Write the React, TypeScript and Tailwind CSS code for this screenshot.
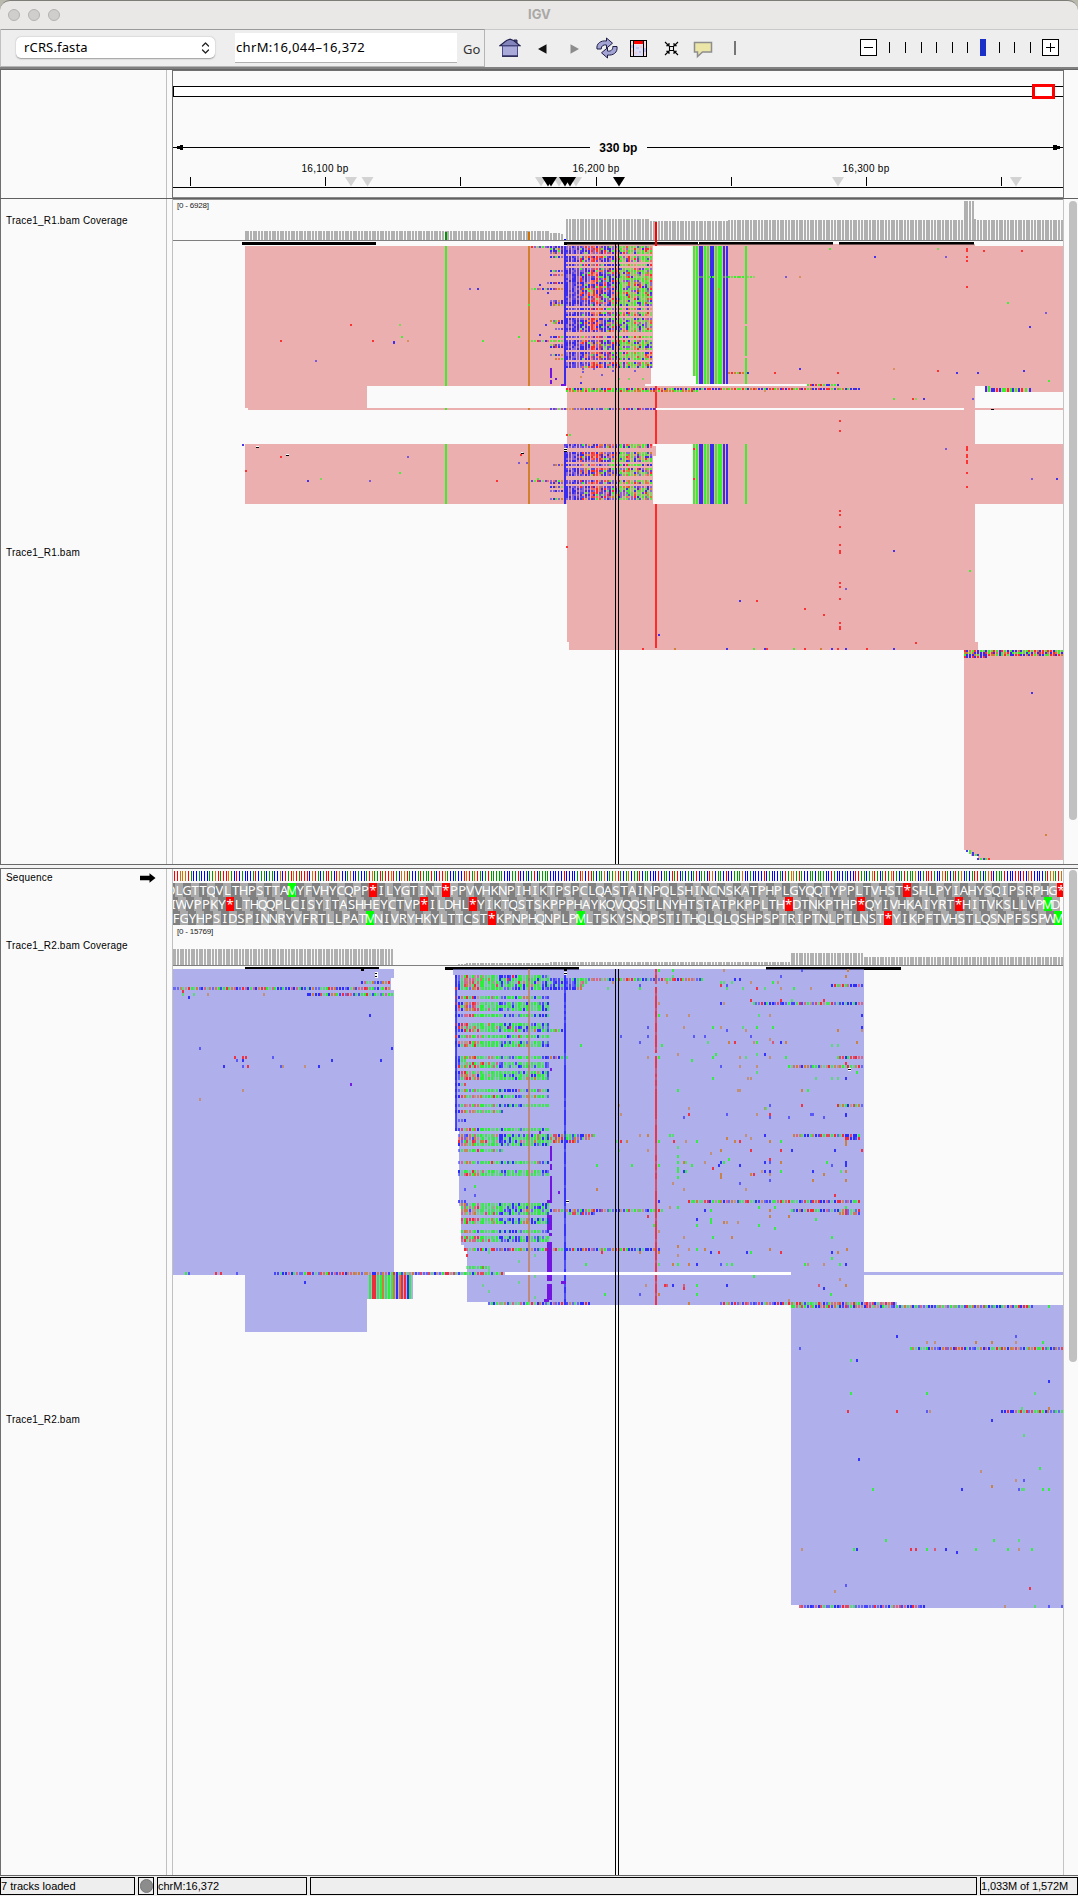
import React from 'react';

type Base = 'A' | 'C' | 'G' | 'T';
type Mark = { x: number; y: number; w: number; h: number; c: string; o?: number };

const PITCH = 2.703;
const ORIGIN = 172.1;
const px = (i: number) => Math.floor(ORIGIN + PITCH * i);
const idx = (x: number) => Math.round((x + 0.4 - ORIGIN) / PITCH);

const R1: Record<string, string> = { A: '#3eed2e', C: '#3b2ceb', G: '#d1802f', T: '#ff2b2b', P: '#7414e0', K: '#000000', W: '#ffffff' };
const R2: Record<string, string> = { A: '#2eee3c', C: '#2d2dfc', G: '#c9803f', T: '#ee2d3c', P: '#7414e0', K: '#000000', W: '#ffffff' };
const PINK = '#ebafaf';
const LAV = '#afafeb';
const PAPER = '#fafafa';

const makeRandom = (seed: number) => {
  let s = seed;
  return () => {
    s = (s * 1664525 + 1013904223) % 4294967296;
    return s / 4294967296;
  };
};

const pick = (r: number, weights: [string, number][]) => {
  let acc = 0;
  for (const [k, w] of weights) {
    acc += w;
    if (r < acc) return k;
  }
  return weights[weights.length - 1][0];
};

const shade = (r: number) => (r < 0.45 ? 1 : r < 0.7 ? 0.8 : 0.55);

/** A read's run of mismatched bases between two pixel columns. */
const run = (rnd: () => number, pal: Record<string, string>, y: number, h: number, x0: number, x1: number, weights: (i: number) => [string, number][], strong = false): Mark[] => {
  const out: Mark[] = [];
  for (let i = idx(x0); px(i) + 2 <= x1 + 0.5; i++) {
    const c = pick(rnd(), weights(i));
    const o = strong ? 1 : shade(rnd());
    if (c !== '-') out.push({ x: px(i), y, w: 2, h, c: pal[c], o });
  }
  return out;
};

/** Isolated mismatches, listed as base letter + "x,y"; a lower-case letter is a low quality call. */
const dots = (pal: Record<string, string>, h: number, ox: number, oy: number, sx: number, list: string): Mark[] =>
  list.trim().split(/\s+/).map((t) => {
    const c = t[0];
    const [a, b] = t.slice(1).split(',').map(Number);
    return { x: Math.round(ox + a / sx) - 1, y: Math.round(oy + b / 3 - h / 2), w: 2, h, c: pal[c.toUpperCase()], o: c === c.toUpperCase() ? 0.95 : 0.65 };
  });

const even: [string, number][] = [['A', 0.27], ['C', 0.36], ['G', 0.15], ['T', 0.22]];

const Marks = ({ items }: { items: Mark[] }) => (
  <>
    {items.map((m, k) => (
      <rect key={k} x={m.x} y={m.y} width={m.w} height={m.h} fill={m.c} opacity={m.o} />
    ))}
  </>
);

const Bars = ({ x0, x1, top, bottom }: { x0: number; x1: number; top: number; bottom: number }) => {
  const out: Mark[] = [];
  for (let i = idx(x0); px(i) < x1; i++) out.push({ x: px(i), y: top, w: 2, h: bottom - top, c: '#b0b0b0' });
  return <Marks items={out} />;
};

const Box = ({ b, c }: { b: [number, number, number, number]; c: string }) => (
  <rect x={b[0]} y={b[1]} width={b[2] - b[0]} height={b[3] - b[1]} fill={c} />
);

/* ---------- forward reads ---------- */

const buildForward = (): Mark[] => {
  const rnd = makeRandom(7);
  const out: Mark[] = [];
  const dense = (i: number): [string, number][] => {
    const k = i - 145;
    if (k < 6) return [['C', 1]];
    if (k < 10) return [['C', 0.68], ['T', 0.16], ['G', 0.08], ['A', 0.08]];
    if (k < 14) return [['T', 0.5], ['C', 0.35], ['G', 0.1], ['A', 0.05]];
    if (k < 20) return [['C', 0.62], ['A', 0.18], ['T', 0.14], ['G', 0.06]];
    if (k % 4 === 1) return [['A', 0.85], ['C', 0.15]];
    return [['A', 0.44], ['C', 0.3], ['G', 0.12], ['T', 0.14]];
  };
  const skipA = [4, 8, 10, 30, 32, 35, 43, 44, 46, 52, 57];
  for (let r = 0; r < 61; r++) if (!skipA.includes(r)) out.push(...run(rnd, R1, 246 + r * 2, 2, 564, 653, dense));
  const skipB = [2, 3, 9, 11, 16, 17, 20];
  for (let r = 0; r < 28; r++) if (!skipB.includes(r)) out.push(...run(rnd, R1, 444 + r * 2, 2, 564, 653, dense));
  const tails: [number, number][] = [[246, 530], [248, 550], [250, 550], [252, 550], [256, 550], [270, 550], [274, 550], [282, 547], [288, 530], [300, 550], [302, 550], [304, 550], [320, 550], [322, 553], [328, 555], [336, 550], [340, 530], [344, 550], [346, 550], [354, 550], [358, 556], [464, 553], [480, 530], [482, 550], [486, 550], [490, 550], [498, 550]];
  for (const [y, x] of tails) {
    out.push(...run(rnd, R1, y, 2, x, 563, (i) => (i < 138 ? [['A', 0.5], ['C', 0.4], ['T', 0.1]] : [['C', 0.66], ['A', 0.14], ['T', 0.12], ['G', 0.08]])));
  }
  out.push(...run(rnd, R1, 388, 2, 567, 860, () => even, true));
  out.push(...run(rnd, R1, 390, 2, 567, 698, () => [['A', 0.5], ['G', 0.3], ['T', 0.2]], true));
  out.push(...run(rnd, R1, 372, 2, 728, 749, () => even, true));
  out.push(...run(rnd, R1, 384, 2, 807, 839, () => even, true));
  out.push(...run(rnd, R1, 408, 2, 550, 656, () => [['C', 0.6], ['A', 0.2], ['T', 0.12], ['G', 0.08]]));
  out.push(...run(rnd, R1, 276, 2, 693, 755, () => [['A', 1]]));
  for (const y of [650, 652, 654]) out.push(...run(rnd, R1, y, 2, 964, 1063, () => even, true));
  out.push(...run(rnd, R1, 656, 2, 964, 987, () => [['C', 0.85], ['T', 0.15]], true));
  return out;
};

const FORWARD = buildForward();

const FORWARD_DOTS: Mark[] = [
  ...dots(R1, 2, 0, 195, 2.904, 'c1365,282 C1388,282 A1536,330 T1019,390 a1161,390 A1167,426 T816,438 T1082,438 C1144,440 C1144,443 g1185,438 A1402,438 A1507,426 c917,498 C706,750'),
  ...dots(R1, 2, 160, 435, 3, 'T363,66 T258,108 C444,138 a483,132 c630,138 c744,66 A720,114 T1011,138 T1083,60 c1077,84 c1101,84 A1134,132'),
  ...dots(R1, 2, 538, 195, 2.904, 'A848,162 C978,186 a1161,162 T1295,168 T1405,168 c1185,186 T1246,162 T1246,168 T1246,186 T1246,198 T1246,276 c720,246 g761,246 A1365,324 c1475,354 C1429,396 C761,522 g1034,522 T1161,528 T688,534 T871,534 C1217,534 C1278,534 C1411,528 A1484,558 A1034,612 T1089,612 a1098,612 C1121,612 c1263,612 T877,678 T877,708 T84,720 A93,720 C6,270 C29,294 C23,390 C6,420 c163,522 c218,528 c186,540 a264,552 c282,528 a305,552 A236,552 C125,564 g125,546 c131,522 c131,530 T453,762 g659,588 g525,282'),
  ...dots(R1, 2, 538, 435, 2.904, 'c1185,42 T1246,36 T1246,42 T1246,46 T1246,60 T1246,66 T1246,78 T1246,84 T1246,114 T1246,156 c1434,132 C1507,132 T453,132 T453,42 T877,228 T877,240 T877,276 T877,330 T877,348 T877,354 T877,444 T877,456 T877,492 T877,564 T877,576 T877,582 T84,336 C1034,348 A1254,408 c894,462 C587,498 T636,498 T775,522 T830,540 C351,600 T1098,624 T305,642 G398,642 C549,642 A627,642 C659,642 T665,642 A743,642 T775,642 G822,642 C854,642 T871,642 C894,642 T955,642 C1034,642 C1434,774 G1475,1200 C1246,1248 A1254,1248 A1254,1253 C1263,1254 C1263,1260 A1271,1260 C1278,1260 C1278,1272 A1286,1272 C1295,1272 A1302,1272 T1309,1272'),
  { x: 550, y: 368, w: 2, h: 10, c: R1.P }, { x: 550, y: 380, w: 2, h: 4, c: R1.P }, { x: 555, y: 378, w: 2, h: 2, c: R1.P }, { x: 561, y: 384, w: 5, h: 2, c: R1.P },
];

const STRIPES: [number, number, Base][] = [[693, 2, 'A'], [696, 2, 'A'], [699, 4, 'C'], [704, 2, 'A'], [707, 2, 'A'], [710, 4, 'C'], [715, 2, 'A'], [718, 4, 'A'], [723, 2, 'C'], [726, 2, 'C']];

const ForwardPlot = () => (
  <svg className="block shrink-0" width="890" height="664" viewBox="173 200 890 664" shapeRendering="crispEdges">
    <Bars x0={245} x1={550} top={231} bottom={240} />
    <Bars x0={550} x1={560} top={233} bottom={240} />
    <Bars x0={561} x1={563} top={234} bottom={240} />
    <Bars x0={566} x1={650} top={219} bottom={240} />
    <Bars x0={650} x1={728} top={221} bottom={240} />
    <Bars x0={728} x1={963} top={220} bottom={240} />
    <Bars x0={964} x1={974} top={201} bottom={240} />
    <Bars x0={974} x1={976} top={219} bottom={240} />
    <Bars x0={977} x1={1063} top={220} bottom={240} />
    <Box b={[445, 232, 447, 240]} c="#009600" />
    <Box b={[528, 232, 530, 240]} c="#d17105" />
    <Box b={[564, 239, 566, 240]} c="#0000ff" />
    <Box b={[173, 240, 1063, 241]} c="#7f7f7f" />
    <Box b={[245, 246, 653, 386]} c={PINK} />
    <Box b={[651, 368, 653, 386]} c={PAPER} />
    <Box b={[245, 386, 367, 408]} c={PINK} />
    <Box b={[248, 408, 656, 410]} c={PINK} />
    <Box b={[567, 244, 975, 246]} c={PINK} />
    <Box b={[242, 242, 376, 245]} c="#000" />
    <Box b={[564, 242, 698, 244]} c="#000" />
    <Box b={[699, 242, 833, 244]} c="#000" />
    <Box b={[839, 242, 974, 244]} c="#000" />
    <Box b={[567, 244, 833, 245]} c="#6b5050" />
    <Box b={[839, 244, 974, 245]} c="#6b5050" />
    <Box b={[564, 242, 567, 245]} c="#000" />
    <Box b={[693, 246, 1063, 386]} c={PINK} />
    <Box b={[645, 384, 807, 386]} c={PAPER} />
    <Box b={[567, 386, 975, 408]} c={PINK} />
    <Box b={[985, 386, 1063, 392]} c={PINK} />
    <Box b={[964, 408, 1063, 410]} c={PINK} />
    <Box b={[567, 410, 975, 444]} c={PINK} />
    <Box b={[245, 444, 653, 504]} c={PINK} />
    <Box b={[651, 446, 656, 456]} c={PINK} />
    <Box b={[693, 444, 1063, 504]} c={PINK} />
    <Box b={[567, 504, 975, 642]} c={PINK} />
    <Box b={[569, 642, 978, 650]} c={PINK} />
    <Box b={[964, 650, 1063, 850]} c={PINK} />
    <Box b={[971, 850, 1063, 856]} c={PINK} />
    <Box b={[978, 856, 1063, 860]} c={PINK} />
    {[[246, 386], [408, 410], [444, 504]].map(([a, b]) => (
      <g key={a}>
        <Box b={[445, a, 447, b]} c={R1.A} />
        <Box b={[528, a, 530, b]} c={R1.G} />
      </g>
    ))}
    {STRIPES.map(([x, w, c]) => (
      <g key={x}>
        <Box b={[x, 246, x + w, x === 693 ? 376 : 384]} c={R1[c]} />
        <Box b={[x, 444, x + w, 504]} c={R1[c]} />
      </g>
    ))}
    <Box b={[693, 376, 696, 384]} c={PAPER} />
    <Box b={[745, 246, 747, 324]} c={R1.A} />
    <Box b={[745, 326, 747, 356]} c={R1.A} />
    <Box b={[745, 358, 747, 384]} c={R1.A} />
    <Box b={[745, 444, 747, 504]} c={R1.A} />
    <Box b={[655, 386, 657, 444]} c={R1.T} />
    <Box b={[656, 408, 964, 410]} c={PAPER} />
    <Box b={[655, 504, 657, 648]} c={R1.T} />
    <Box b={[655, 222, 657, 246]} c="#ff0000" />
    <Marks items={FORWARD} />
    <Box b={[564, 246, 566, 385]} c={R1.C} />
    <Box b={[564, 452, 566, 504]} c={R1.C} />
    <Marks items={FORWARD_DOTS} />
    {([['C', 985, 386, 392], ['A', 988, 386, 392], ['C', 991, 388, 392], ['C', 993, 388, 392], ['T', 996, 388, 392], ['C', 999, 388, 392], ['A', 1002, 388, 392], ['A', 1004, 388, 392], ['T', 1007, 388, 392], ['A', 1010, 388, 392], ['C', 1012, 388, 392], ['A', 1015, 388, 392], ['C', 1018, 388, 392], ['T', 1021, 388, 392], ['A', 1025, 388, 392], ['C', 1029, 388, 392]] as [Base, number, number, number][]).map(([c, x, a, b]) => (
      <Box key={x} b={[x, a, x + 2, b]} c={R1[c]} />
    ))}
    <Box b={[564, 448, 567, 452]} c="#fff" />
    <Box b={[564, 449, 567, 450]} c="#000" />
    <Box b={[564, 451, 567, 452]} c="#000" />
    <Box b={[991, 409, 994, 410]} c="#000" />
    <Box b={[256, 446, 259, 448]} c="#fff" />
    <Box b={[256, 447, 259, 448]} c="#000" />
    <Box b={[286, 454, 289, 456]} c="#fff" />
    <Box b={[286, 455, 289, 456]} c="#000" />
    <Box b={[521, 452, 523, 453]} c="#fff" />
    <Box b={[521, 453, 524, 454]} c="#000" />
    <Box b={[615, 244, 616, 864]} c="#000" />
    <Box b={[618, 244, 619, 864]} c="#000" />
  </svg>
);

/* ---------- reference sequence ---------- */

const SEQUENCE =
  'TTTGGGTACCACCCAAGTATTGACTCACCCATCAACAACCGCTATGTATTTCGTACATTACTGCCAGCCACCATGAATATTGTACGGTACCATAAATACTTGACCACCTGTAGTACATAAAAACCCAATCCACATCAAAACCCCCTCCCCATGCTTACAAGCAAGTACAGCAATCAACCCTCAACTATCACACATCAACTGCAACTCCAAAGCCACCCCTCACCCACTAGGATACCAACAAACCTACCCACCCTTAACAGTACATAGTACATAAAGCCATTTACCGTACATAGCACATTACAGTCAAATCCCTTCTCGTCCCCATGGATGACCCCCC';
const SEQ_COLOR: Record<string, string> = { A: '#009600', C: '#0000ff', G: '#d17105', T: '#ff0000' };

const FRAMES: { start: number; aa: string }[] = [
  { start: -2, aa: 'DLGTTQVLTHPSTTAMYFVHYCQPP*ILYGTINT*PPVVHKNPIHIKTPSPCLQASTAINPQLSHINCNSKATPHPLGYQQTYPPLTVHST*SHLPYIAHYSQIPSRPHG*' },
  { start: -1, aa: 'IWVPPKY*LTHQQPLCISYITASHHEYCTVP*ILDHL*YIKTQSTSKPPPHAYKQVQQSTLNYHTSTATPKPPLTH*DTNKPTHP*QYIVHKAIYRT*HITVKSLLVPMD' },
  { start: 0, aa: 'FGYHPSIDSPINNRYVFRTLLPATMNIVRYHKYLTTCST*KPNPHQNPLPMLTSKYSNQPSTITHQLQLQSHPSPTRIPTNLPTLNST*YIKPFTVHSTLQSNPFSSPWM' },
];

const SequenceTrack = () => (
  <div className="flex w-[890px] flex-col overflow-hidden pb-[4px] pt-[2px]">
    <svg className="mb-[2px] block shrink-0" width="890" height="10" viewBox="173 0 890 10" shapeRendering="crispEdges">
      {SEQUENCE.split('').map((b, i) => (
        <rect key={i} x={px(i)} y={0} width={1} height={10} fill={SEQ_COLOR[b]} />
      ))}
    </svg>
    {FRAMES.map((f) => (
      <div key={f.start} className="flex h-[14px] w-[890px]">
        {f.aa.split('').map((a, k) => (
          <span
            key={k}
            style={k === 0 ? { marginLeft: ORIGIN - 173 + f.start * PITCH } : undefined}
            className={
              'flex h-[14px] w-[8.109px] shrink-0 items-center justify-center text-[13px] leading-[14px] text-white ' +
              (a === '*' ? 'bg-[#ff0000]' : a === 'M' ? 'bg-[#00ff00]' : k % 2 ? 'bg-[#aaaaaa]' : 'bg-[#808080]')
            }
          >
            {a}
          </span>
        ))}
      </div>
    ))}
  </div>
);

/* ---------- reverse reads ---------- */

const buildReverse = (): Mark[] => {
  const rnd = makeRandom(31);
  const out: Mark[] = [];
  const dense = (i: number): [string, number][] => {
    const x = px(i);
    if (x < 461) return [['C', 0.85], ['T', 0.15]];
    if (x < 478) return [['G', 0.26], ['T', 0.3], ['A', 0.36], ['C', 0.08]];
    if (x < 498) return [['A', 0.88], ['T', 0.06], ['G', 0.06]];
    if (x < 506) return [['C', 0.5], ['A', 0.5]];
    if (x < 522) return [['A', 0.6], ['C', 0.34], ['T', 0.06]];
    if (x < 540) return [['A', 0.7], ['C', 0.2], ['G', 0.1]];
    return [['A', 0.45], ['C', 0.55]];
  };
  const rows = [2, 3, 4, 5, 6, 9, 11, 12, 13, 15, 18, 19, 20, 22, 24, 25, 29, 31, 32, 34, 35, 36, 40, 42, 45, 53];
  for (const r of rows) out.push(...run(rnd, R2, 969 + r * 3, 3, 455, 549, dense));
  for (const r of [30, 38, 47]) out.push(...run(rnd, R2, 969 + r * 3, 3, 455, r === 47 ? 503 : 467, dense));
  for (const y of [1119, 1200]) out.push(...run(rnd, R2, y, 3, 458, 467, () => [['C', 1]]));
  for (const y of [1134, 1137, 1140, 1143, 1161, 1170, 1173]) out.push(...run(rnd, R2, y, 3, 458, 549, dense));
  out.push(...run(rnd, R2, 1149, 3, 458, 503, dense));
  for (const y of [1203, 1206, 1209, 1212, 1218, 1221, 1230, 1236, 1239]) out.push(...run(rnd, R2, y, 3, 461, 549, dense));
  out.push(...run(rnd, R2, 1266, 3, 466, 491, () => [['A', 0.7], ['T', 0.3]]));
  for (const y of [978, 981, 984, 987]) {
    out.push(...run(rnd, R2, y, 3, 550, y === 978 ? 586 : 592 - (y - 978), (i) => (px(i) < 575 ? [['C', 0.9], ['A', 0.1]] : [['A', 0.4], ['G', 0.3], ['T', 0.3]])));
  }
  const longRows: [number, number, number][] = [
    [978, 586, 703], [984, 832, 864], [1002, 752, 864], [1029, 550, 563], [1056, 550, 563], [1056, 837, 864], [1065, 787, 864], [1104, 837, 864],
    [1134, 550, 595], [1137, 550, 592], [1140, 550, 580], [1134, 793, 862], [1137, 845, 862], [1200, 689, 862], [1209, 550, 665], [1212, 570, 596], [1209, 791, 862], [1212, 838, 862],
    [1248, 464, 661], [1272, 274, 503], [1302, 488, 590], [1302, 720, 896], [1305, 791, 1033], [1347, 910, 1063], [1410, 1002, 1063],
    [987, 173, 391], [993, 307, 394], [981, 362, 391],
  ];
  for (const [y, a, b] of longRows) out.push(...run(rnd, R2, y, 3, a, b, () => even));
  out.push(...run(rnd, R2, 1605, 3, 799, 925, () => [['C', 0.55], ['T', 0.33], ['A', 0.12]]));
  for (let k = 0; k < 10; k++) out.push({ x: [488, 534, 518, 482][k % 4], y: 1251 + Math.floor((k * 5) / 3) * 3, w: 2, h: 3, c: R2.A, o: 0.5 });
  return out;
};

const REVERSE = buildReverse();

const REVERSE_DOTS: Mark[] = [
  ...dots(R2, 3, 0, 860, 2.904, 'T531,394 a531,403 a563,403 g604,403 C549,412 g767,403 C1074,466 c581,565 C1138,565 T682,592 c688,601 T706,592 T713,592 C706,601 c793,592 C964,601 C1105,601 C650,619 c706,619 T719,619 c817,619 g822,619 g886,619 C926,619 P1019,673 g706,691 g581,718'),
  ...dots(R2, 3, 538, 860, 2.904, 'A351,331 A392,331 a392,349 g540,331 c767,331 G900,331 c706,349 G894,349 g375,367 c296,376 A296,385 a203,385 g218,367 a531,367 T531,376 a540,367 a563,367 a549,385 c549,376 a595,385 g618,367 T636,385 a659,385 g706,385 A682,367 g697,367 A743,385 g793,385 C572,358 C587,358 g351,430 C531,430 g540,430 T618,421 T706,421 a738,421 T830,421 A351,466 g375,466 g438,466 a642,466 g674,466 C941,466 c320,502 g424,502 A508,502 g531,502 a595,502 A636,502 A682,502 c549,511 g604,511 G871,511 C941,502 g941,511 c241,529 c320,529 c453,529 c485,529 c618,529 g674,538 c296,547 a494,547 G555,547 T572,547 g627,547 A636,547 t682,547 C706,547 G720,547 G926,547 A125,556 A360,556 a854,556 a871,556 g406,583 A517,583 a636,583 C659,583 g320,592 A351,592 A508,592 g587,592 a604,592 g674,592 A720,592 A447,601 a84,592 c531,619 g587,619 g636,619 a636,637 T894,610 A926,637 P38,628 A508,655 g610,655 g618,655 a807,655 a854,655 a871,655 C894,655 A406,691 g581,691 g587,691 G767,691 A784,691 T767,736 c674,736 g438,745 g659,745 a663,745 g241,763 T438,763 c549,763 g636,763 c424,772 T674,763 c674,772 c729,772 c793,763 c799,763 C894,763 C894,767 c830,772 g235,736'),
  ...dots(R2, 3, 430, 1120, 3, 'A501,136 A606,136 G501,208 P387,217 P330,37 g630,46 G654,46 A720,46 a728,46 G891,55 g948,46 C1005,46 A559,64 G591,64 T573,64 A687,64 T733,64 g769,64 A801,64 G915,64 T930,64 g963,55 G1020,64 A1053,64 G1248,64 G1248,73 a744,82 g654,91 a567,91 G873,91 T963,91 T1053,91 C1086,91 C1215,91 T1296,91 g843,100 A744,109 A744,127 A744,145 A744,154 A744,172 A687,136 G763,127 a768,127 A786,136 g825,127 C873,127 C867,136 A882,127 A897,118 T849,145 C930,136 C1005,127 c1020,127 T1020,118 G1053,127 C1248,127 C1248,136 A1191,127 c1206,136 C763,154 A768,154 G873,163 G873,172 G963,163 T972,163 g996,154 C1005,154 C1020,154 g1020,163 A1053,154 C1149,154 G1182,163 a1233,154 G1248,154 c1020,181 G1149,181 G1248,181 g729,190 c930,190 g948,208 g762,208 T1215,226 C687,244 g720,262 A744,262 A987,262 A1035,262 A1248,262 T654,289 A672,316 C825,271 A843,271 G1020,271 G1020,289 C801,298 A801,316 A843,307 A843,298 G882,307 g891,307 g924,307 A987,316 A1035,325 G1077,289 A1158,298 g687,334 g762,352 A849,352 G906,352 A1206,352 G744,379 c687,388 g777,388 G825,388 A801,388 G1020,388 T516,397 G630,397 G687,397 C843,397 T867,397 C951,397 A963,397 T1053,397 C1206,397 G1224,397 G1251,388 A1206,415 g744,406 A468,433 a687,433 G728,433 A744,433 G777,433 C801,433 c873,433 a891,433 A906,433 A1125,433 g1134,433 g1182,433 A1230,433 C1248,433 A972,469 g1230,478 g648,496 T705,496 t711,496 C729,496 t762,496 T762,505 A801,496 C891,496 t1167,496 C1182,505 G1248,496 A525,523 c630,523 G687,523 A801,523 A1203,523 G777,550 g1077,541 A135,199 c135,226 c105,208 T111,406'),
  ...dots(R2, 3, 160, 1240, 3, 'A78,100 c87,100 T168,100 T183,100 c231,100 C435,127'),
  ...dots(R2, 3, 770, 1240, 3, 'C381,289 c738,289 g471,307 g495,307 G618,307 G666,307 g738,307 A819,307 c90,325 a243,361 C261,361 C837,424 A243,460 A471,460 a795,460 T234,514 T381,514 c471,514 g480,514 a756,505 G837,505 C666,541 a762,586 C267,658 A810,685 g633,694 g738,721 c762,721 G666,739 A309,748 C576,748 c747,748 a756,748 a762,748 A819,748 A837,748 A348,901 A672,901 a747,901 g96,928 A252,928 C261,928 T423,928 T438,928 A471,928 t495,928 C528,928 A618,928 A714,928 g747,928 A786,928 C561,937 c228,1036 T780,1045 g195,1054 g705,1099 a795,1099 c837,1099 c876,1099 A837,199'),
];

const LOWER_STRIPES: [number, number, Base][] = [[369, 2, 'A'], [372, 4, 'T'], [377, 2, 'A'], [380, 2, 'A'], [382, 2, 'G'], [385, 2, 'A'], [388, 2, 'A'], [391, 2, 'A'], [393, 2, 'G'], [396, 2, 'C'], [399, 2, 'G'], [401, 2, 'T'], [404, 2, 'T'], [407, 2, 'C'], [409, 2, 'A']];

const fading = (x: number, y0: number, y1: number, c: string, seed: number): Mark[] => {
  const rnd = makeRandom(seed);
  const out: Mark[] = [];
  for (let y = y0; y < y1; y += 3) out.push({ x, y, w: 2, h: 3, c, o: rnd() < 0.7 ? 0.95 : 0.75 });
  return out;
};

const ReversePlot = () => (
  <svg className="block shrink-0" width="890" height="946" viewBox="173 929 890 946" shapeRendering="crispEdges">
    <Bars x0={173} x1={393} top={949} bottom={965} />
    <Bars x0={458} x1={466} top={964} bottom={965} />
    <Bars x0={466} x1={550} top={963} bottom={965} />
    <Bars x0={550} x1={790} top={962} bottom={965} />
    <Bars x0={791} x1={863} top={953} bottom={965} />
    <Bars x0={864} x1={1063} top={957} bottom={965} />
    <Box b={[173, 965, 1063, 966]} c="#7f7f7f" />
    <Box b={[245, 967, 379, 969]} c="#000" />
    <Box b={[445, 967, 579, 970]} c="#000" />
    <Box b={[766, 967, 901, 970]} c="#000" />
    <Box b={[173, 969, 394, 1275]} c={LAV} />
    <Box b={[391, 978, 394, 990]} c={PAPER} />
    <Box b={[245, 1275, 367, 1332]} c={LAV} />
    <Box b={[367, 1275, 413, 1299]} c={LAV} />
    <Box b={[394, 1272, 505, 1275]} c={LAV} />
    <Box b={[453, 969, 864, 975]} c={LAV} />
    <Box b={[456, 975, 864, 1131]} c={LAV} />
    <Box b={[459, 1131, 864, 1206]} c={LAV} />
    <Box b={[461, 1206, 864, 1245]} c={LAV} />
    <Box b={[464, 1245, 864, 1251]} c={LAV} />
    <Box b={[467, 1251, 864, 1302]} c={LAV} />
    <Box b={[488, 1302, 864, 1305]} c={LAV} />
    <Box b={[864, 1272, 1063, 1275]} c={LAV} />
    <Box b={[864, 1302, 897, 1305]} c={LAV} />
    <Box b={[791, 1305, 1063, 1605]} c={LAV} />
    <Box b={[799, 1605, 1063, 1608]} c={LAV} />
    <Box b={[453, 969, 579, 970]} c="#5a5a90" />
    <Box b={[766, 969, 864, 970]} c="#5a5a90" />
    {LOWER_STRIPES.map(([x, w, c]) => (
      <Box key={x} b={[x, 1275, x + w, 1299]} c={R2[c]} />
    ))}
    <g opacity="0.85">
      <Box b={[455, 975, 457, 1131]} c={R2.C} />
    </g>
    <Marks items={REVERSE} />
    <g opacity="0.85">
      <Box b={[528, 969, 530, 1302]} c="#c08468" />
    </g>
    <Marks items={fading(564, 975, 1305, R2.C, 3)} />
    <Marks items={fading(655, 969, 984, R2.T, 5)} />
    <Marks items={fading(655, 987, 1053, R2.T, 9)} />
    <Marks items={fading(655, 1056, 1272, R2.T, 11)} />
    <Marks items={fading(655, 1275, 1305, R2.T, 13)} />
    <Box b={[505, 1272, 791, 1275]} c="#fff" />
    <Box b={[550, 1146, 552, 1161]} c={R2.P} />
    <Box b={[550, 1164, 552, 1170]} c={R2.P} />
    <Box b={[550, 1176, 552, 1203]} c={R2.P} />
    <Box b={[547, 1200, 552, 1203]} c={R2.P} />
    <Box b={[547, 1215, 552, 1218]} c={R2.P} />
    <Box b={[549, 1218, 552, 1224]} c={R2.P} />
    <Box b={[547, 1224, 552, 1230]} c={R2.P} />
    <Box b={[549, 1233, 552, 1236]} c={R2.P} />
    <Box b={[547, 1242, 552, 1272]} c={R2.P} />
    <Box b={[547, 1275, 552, 1281]} c={R2.P} />
    <Box b={[547, 1284, 552, 1300]} c={R2.P} />
    <Box b={[544, 1299, 549, 1302]} c={R2.P} />
    <Box b={[561, 1281, 566, 1284]} c={R2.P} />
    <Marks items={REVERSE_DOTS} />
    <Box b={[361, 969, 364, 971]} c="#000" />
    <Box b={[375, 972, 378, 978]} c="#fff" />
    <Box b={[375, 973, 377, 974]} c="#000" />
    <Box b={[375, 976, 377, 977]} c="#000" />
    <Box b={[564, 969, 567, 971]} c="#000" />
    <Box b={[564, 972, 567, 975]} c="#fff" />
    <Box b={[564, 973, 567, 974]} c="#000" />
    <Box b={[848, 1068, 851, 1071]} c="#fff" />
    <Box b={[848, 1069, 851, 1070]} c="#000" />
    <Box b={[566, 1200, 569, 1203]} c="#fff" />
    <Box b={[566, 1201, 569, 1202]} c="#000" />
    <Box b={[615, 969, 616, 1875]} c="#000" />
    <Box b={[618, 969, 619, 1875]} c="#000" />
  </svg>
);

/* ---------- ruler ---------- */

const Ruler = () => (
  <svg className="block shrink-0" width="890" height="126" viewBox="173 71 890 126" fontFamily="'Liberation Sans', Arial, sans-serif">
    <g shapeRendering="crispEdges">
      <Box b={[173, 86, 1063, 97]} c="#000" />
      <Box b={[174, 87, 1063, 96]} c="#fff" />
      <rect x="1033.5" y="85.5" width="20" height="12" fill="#fff" stroke="#f00" strokeWidth="3" />
      <Box b={[173, 147, 590, 148]} c="#000" />
      <Box b={[647, 147, 1063, 148]} c="#000" />
      <Box b={[180, 145, 183, 150]} c="#000" />
      <Box b={[177, 146, 180, 149]} c="#000" />
      <Box b={[1053, 145, 1057, 150]} c="#000" />
      <Box b={[1057, 146, 1060, 149]} c="#000" />
      {[190, 325, 460, 596, 731, 866, 1001].map((x) => (
        <Box key={x} b={[x, 177, x + 1, 186]} c="#000" />
      ))}
      <Box b={[173, 187, 1063, 188]} c="#000" />
    </g>
    {([[351, 0], [367.5, 0], [541, 0], [559, 0], [576, 0], [838, 0], [1016, 0], [548, 1], [551, 1], [565, 1], [570, 1], [619, 1]] as [number, number][]).map(([x, on]) => (
      <path key={x} d={`M${x - 6} 177h12l-6 9.5z`} fill={on ? '#000' : '#d3d3d3'} />
    ))}
    <text x="618.3" y="151.8" fontSize="12" fontWeight="700" textAnchor="middle">330 bp</text>
    {([[325, '16,100 bp'], [596, '16,200 bp'], [866, '16,300 bp']] as [number, string][]).map(([x, t]) => (
      <text key={t} x={x} y="172.3" fontSize="10" letterSpacing="0.28" textAnchor="middle" fill="#000">{t}</text>
    ))}
  </svg>
);

/* ---------- toolbar ---------- */

const HomeIcon = () => (
  <svg width="22" height="20" viewBox="0 0 22 20">
    <path d="M15 2h3v4h-3z" fill="#4a4a8c" stroke="#22224f" />
    <path d="M.8 7.8 7.5 2.6 11 1.2l3.6 1.4 6.6 5.2z" fill="#8585bd" stroke="#22224f" strokeWidth="1.1" />
    <path d="M3.5 8h15v10h-15z" fill="#aaaad8" stroke="#4a4a8c" strokeWidth="1" />
    <path d="M3 18.2h16" stroke="#22224f" strokeWidth="1.4" />
  </svg>
);

const RefreshIcon = () => (
  <svg width="22" height="22" viewBox="0 0 22 22" fill="#a3a3d4" stroke="#1d1d45" strokeWidth="1" strokeLinejoin="round">
    <path d="M1 12C0 6.500 5 3.200 10.500 4V1l6 5.200-6 5V8C7.500 7.400 5 9 5.200 12z" />
    <path d="M21 9.500c1 6-4 9.300-9.500 8.500v3l-6-5.200 6-5V14c3 .6 5.500-1 5.300-4.500z" />
  </svg>
);

const RegionIcon = () => (
  <svg width="17" height="17" viewBox="0 0 17 17" shapeRendering="crispEdges">
    <path d="M0 0h17v17H0z" fill="#000" />
    <path d="M1 1h15v15H1z" fill="#f2dfe6" />
    <path d="M3 1h1v15H3zM13 1h1v15h-1z" fill="#000" />
    <path d="M4 1h9v3H4z" fill="#f00" />
    <path d="M4 5h9v11H4z" fill="#dcdcf6" />
    <path d="M1 5h2v3H1zM14 8h2v4h-2zM6 7h3v2H6zM9 11h2v2H9z" fill="#c3c3ee" />
    <path d="M1 10h2v2H1zM5 12h2v2H5zM10 6h2v2h-2z" fill="#f6c9cf" />
  </svg>
);

const FitIcon = () => (
  <svg width="15" height="15" viewBox="0 0 15 15" fill="none" stroke="#000" strokeWidth="1.1">
    <path d="M5.500 5.500h4v4h-4z" />
    <path d="M1 1l4 4M14 1l-4 4M1 14l4-4M14 14l-4-4M2.200 4.800H5V2M12.800 4.800H10V2M2.200 10.200H5V13M12.800 10.200H10V13" />
  </svg>
);

const BubbleIcon = () => (
  <svg width="20" height="18" viewBox="0 0 20 18">
    <path d="M1.500 1.500h17v9.500H9.500L4.500 15.500V11h-3z" fill="#ebe6a8" stroke="#8d8d8d" strokeWidth="1.500" />
  </svg>
);

const ZoomButton = ({ plus }: { plus?: boolean }) => (
  <svg width="17" height="17" viewBox="0 0 17 17" shapeRendering="crispEdges" className="block shrink-0">
    <path d="M0 0h17v17H0z" fill="#000" />
    <path d="M1 1h15v15H1z" fill="#fff" />
    <path d={plus ? 'M4 8h9v1H4zM8 4h1v9H8z' : 'M4 8h9v1H4z'} fill="#000" />
  </svg>
);

const Toolbar = () => (
  <div className="flex h-[38px] items-start border-l border-[#c0c0c0] bg-[#eeeeee]">
    <div className="flex h-[38px] w-[484px] items-start border-b border-r border-t border-b-[#b5b5b5] border-r-[#b5b5b5] border-t-[#9a9a9a] font-['Noto_Sans','Open_Sans',sans-serif] text-[13px] text-black">
      <div className="ml-[15px] mt-[7px] flex h-[21px] w-[199px] items-center justify-between rounded-[5px] bg-white pl-[8px] pr-[5px] shadow-[0_0.5px_1.5px_rgba(0,0,0,0.35)]">
        <span className="tracking-[0.15px]">rCRS.fasta</span>
        <svg width="9" height="12" viewBox="0 0 9 12" fill="none" stroke="#222" strokeWidth="1.3" strokeLinecap="round" strokeLinejoin="round">
          <path d="M1.500 4l3-3 3 3M1.500 8l3 3 3-3" />
        </svg>
      </div>
      <div className="ml-[20px] mt-[3px] flex h-[30px] w-[222px] items-center border-b border-[#b0b0b0] bg-white pl-[1px] tracking-[0.35px]">chrM:16,044–16,372</div>
      <div className="ml-[6px] mt-[9px] leading-[20px] text-[#333]">Go</div>
    </div>
    <div className="flex h-[38px] flex-1 items-center border-t border-[#c9c9c9]">
      <div className="ml-[14px] mt-[-2px]"><HomeIcon /></div>
      <svg className="ml-[17px]" width="9" height="10" viewBox="0 0 9 10"><path d="M0 5l8.500-4.800v9.600z" fill="#111" /></svg>
      <svg className="ml-[23px]" width="9" height="10" viewBox="0 0 9 10"><path d="M9 5L.5.2v9.600z" fill="#8c8c8c" /></svg>
      <div className="ml-[17px] mt-[-1px]"><RefreshIcon /></div>
      <div className="ml-[12px] mt-[-1px]"><RegionIcon /></div>
      <div className="ml-[17px]"><FitIcon /></div>
      <div className="ml-[14px] mt-[2px]"><BubbleIcon /></div>
      <div className="ml-[21px] mt-[-2px] h-[14px] w-[2px] bg-[#757575]" />
      <div className="ml-auto mr-[19px] mt-[-2px] flex items-center">
        <ZoomButton />
        <svg className="block" width="165" height="17" viewBox="877 39 165 17" shapeRendering="crispEdges">
          {[889, 905, 921, 936, 952, 967, 999, 1014, 1030].map((x) => (
            <Box key={x} b={[x, 42, x + 1, 53]} c="#000" />
          ))}
          <Box b={[980, 39, 986, 56]} c="#1a2fc8" />
        </svg>
        <ZoomButton plus />
      </div>
    </div>
  </div>
);

/* ---------- page ---------- */

const Name = ({ className, children }: { className: string; children: React.ReactNode }) => (
  <div className={'flex items-center justify-between pl-[5px] pr-[10px] text-[10px] leading-[12px] tracking-[0.2px] text-black ' + className}>{children}</div>
);

const Gutter = () => <div className="w-[7px] shrink-0 border-l border-r border-[#c0c0c0]" />;

const Scroll = ({ className }: { className: string }) => (
  <div className="flex flex-1 justify-center border-l border-[#c4c4c4] bg-[#fafafa] pl-[3px]">
    <div className={'w-[8px] rounded-full bg-[#c1c1c1] ' + className} />
  </div>
);

export default function App() {
  return (
    <div className="flex h-[1896px] w-[1078px] flex-col overflow-hidden bg-[#b9b9ae] font-['Liberation_Sans',Arial,sans-serif]">
      <header className="flex h-[29px] shrink-0 items-center rounded-t-[10px] border-t border-[#7d7d78] bg-[#e9e8e6] pl-[8px]">
        <div className="flex gap-[8px]">
          {[0, 1, 2].map((k) => (
            <div key={k} className="h-[12px] w-[12px] rounded-full border border-[#b4b3b1] bg-[#cfcecc]" />
          ))}
        </div>
        <div className="ml-[468px] font-[Inter,sans-serif] text-[13px] font-bold text-[#a9a8a6]">IGV</div>
      </header>
      <div className="shrink-0"><Toolbar /></div>
      <div className="h-[3px] shrink-0 border-b border-[#666] bg-[#808080]" />
      <section className="flex h-[128px] shrink-0 border-l border-[#6f6f6f] bg-[#fafafa]">
        <div className="w-[165px] shrink-0" />
        <div className="w-[6px] shrink-0 border-l border-[#c0c0c0]" />
        <div className="border border-[#6f6f6f] border-b-[#8a8a8a]"><Ruler /></div>
      </section>
      <div className="h-[1px] shrink-0 bg-[#606060]" />
      <section className="flex h-[665px] shrink-0 border-l border-[#6f6f6f] bg-[#fafafa]">
        <div className="w-[165px] shrink-0">
          <Name className="h-[43px]">Trace1_R1.bam Coverage</Name>
          <Name className="h-[621px]">Trace1_R1.bam</Name>
        </div>
        <Gutter />
        <div className="relative w-[890px] shrink-0 border-t border-[#909090]">
          <ForwardPlot />
          <span className="absolute left-[4px] top-[1px] text-[8px] leading-[10px] tracking-[-0.2px] text-[#222]">[0 - 6928]</span>
        </div>
        <Scroll className="mt-[2px] h-[619px]" />
      </section>
      <div className="h-[5px] shrink-0 border-b border-t border-[#6a6a6a] bg-[#f4f4f4]" />
      <section className="flex h-[1006px] shrink-0 border-l border-[#6f6f6f] bg-[#fafafa]">
        <div className="w-[165px] shrink-0">
          <Name className="h-[17px]">
            <span>Sequence</span>
            <svg width="16" height="10" viewBox="0 0 16 10"><path d="M0 2.800h9.500V.2L15.500 5l-6 4.800V7.200H0z" fill="#000" /></svg>
          </Name>
          <Name className="mt-[43px] h-[34px]">Trace1_R2.bam Coverage</Name>
          <Name className="h-[914px]">Trace1_R2.bam</Name>
        </div>
        <Gutter />
        <div className="w-[890px] shrink-0 overflow-hidden">
          <div className="font-['Noto_Sans','Open_Sans',sans-serif]"><SequenceTrack /></div>
          <div className="relative">
            <ReversePlot />
            <span className="absolute left-[4px] top-[-2px] text-[8px] leading-[10px] tracking-[-0.2px] text-[#222]">[0 - 15769]</span>
          </div>
        </div>
        <Scroll className="mt-[1px] h-[492px]" />
      </section>
      <footer className="flex h-[21px] shrink-0 gap-[3px] border-t border-[#666] bg-[#eeeeee] pb-[1px] pt-[1px] text-[11px] leading-[17px] text-black">
        <div className="w-[135px] border border-black">7 tracks loaded</div>
        <div className="flex w-[16px] items-center justify-center border border-black">
          <div className="h-[14px] w-[13px] rounded-full border border-[#777] bg-[#8c8c8c]" />
        </div>
        <div className="w-[150px] border border-black">chrM:16,372</div>
        <div className="w-[667px] border border-black" />
        <div className="flex-1 whitespace-nowrap border border-black tracking-[-0.1px]">1,033M of 1,572M</div>
      </footer>
    </div>
  );
}
